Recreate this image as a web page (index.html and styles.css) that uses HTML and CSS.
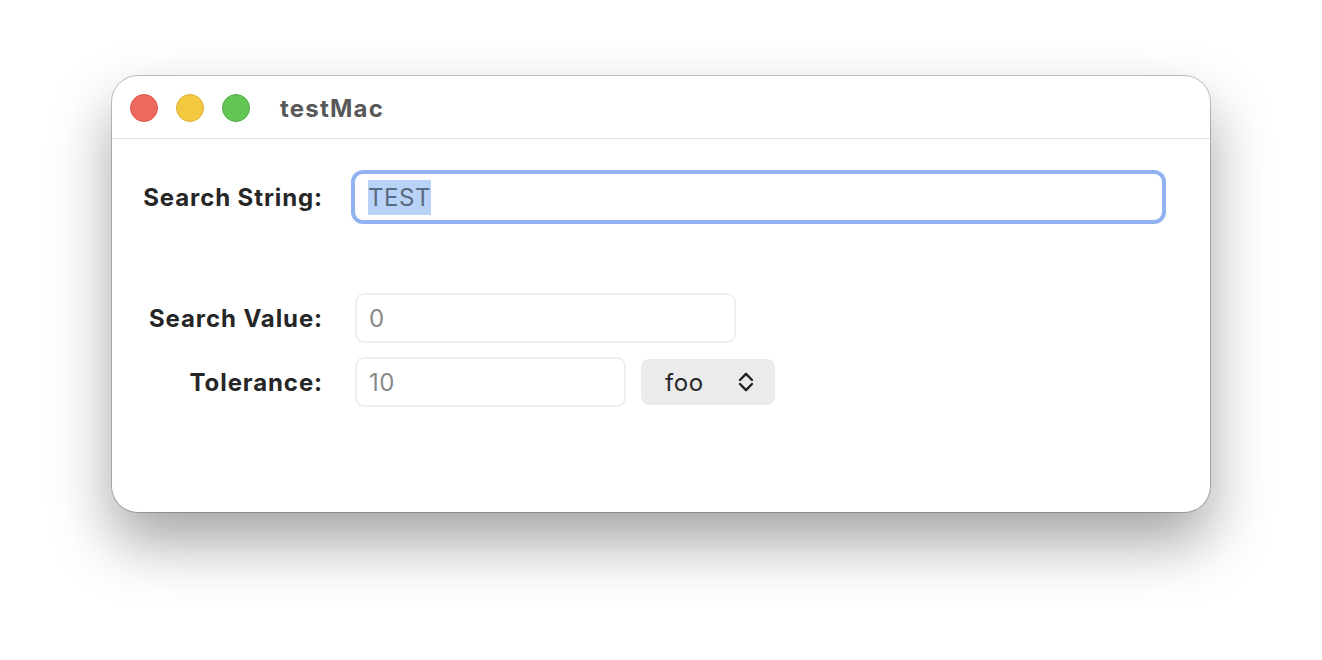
FILE: index.html
```html
<!DOCTYPE html>
<html lang="en">
<head>
  <meta charset="UTF-8" />
  <title>testMac</title>
  <link rel="stylesheet" href="styles.css">
</head>
<body>
  <div class="window">
    <div class="titlebar">
      <div class="lights">
        <span class="light close"></span>
        <span class="light minimize"></span>
        <span class="light zoom"></span>
      </div>
      <div class="title">testMac</div>
    </div>

    <div class="form">
      <div class="row row-string">
        <label class="label">Search String:</label>
        <div class="field focused"><span class="selected">TEST</span></div>
      </div>
      <div class="row row-value">
        <label class="label">Search Value:</label>
        <div class="field value-field">0</div>
      </div>
      <div class="row row-tolerance">
        <label class="label">Tolerance:</label>
        <div class="field tolerance-field">10</div>
        <div class="popup">
          <span>foo</span>
          <svg class="chevrons" width="16" height="22" viewBox="0 0 16 22">
            <path d="M2 9 L8 2.8 L14 9" fill="none" stroke="#222" stroke-width="2.4" stroke-linecap="round" stroke-linejoin="round"/>
            <path d="M2 13 L8 19.2 L14 13" fill="none" stroke="#222" stroke-width="2.4" stroke-linecap="round" stroke-linejoin="round"/>
          </svg>
        </div>
      </div>
    </div>
  </div>
</body>
</html>
```

FILE: styles.css
```css
html, body {
  background: white;
}
body {
  margin: 0;
  min-height: 660px;
  box-sizing: border-box;
  font-family: Inter, "Noto Sans", sans-serif;
  padding: 76px 0 0 112px;
}
.window {
  width: 1098px;
  height: 436px;
  background: white;
  border-radius: 26px;
  box-shadow: 0 0 0 1px rgba(0,0,0,0.22), 0 30px 60px rgba(0,0,0,0.36);
  overflow: hidden;
}
.titlebar {
  height: 63px;
  box-sizing: border-box;
  border-bottom: 1px solid #e2e2e2;
  display: flex;
  align-items: center;
  padding: 2px 0 0 18px;
}
.lights {
  display: flex;
  gap: 18px;
}
.light {
  width: 28px;
  height: 28px;
  border-radius: 50%;
  box-sizing: border-box;
}
.close { background: #ee6a5f; border: 1px solid #d9574d; }
.minimize { background: #f4c740; border: 1px solid #ddb02f; }
.zoom { background: #62c554; border: 1px solid #50ad43; }
.title {
  margin-left: 30px;
  font-size: 24px;
  font-weight: 700;
  color: #585858;
  letter-spacing: 1.2px;
}
.form {
  padding-top: 31px;
}
.row {
  display: flex;
  align-items: center;
}
.label {
  width: 211px;
  text-align: right;
  font-size: 24px;
  font-weight: 700;
  color: #262626;
  margin-right: 32px;
  letter-spacing: 0.9px;
}
.field {
  box-sizing: border-box;
  height: 50px;
  border: 2px solid #efefef;
  border-radius: 9px;
  padding-left: 12px;
  display: flex;
  align-items: center;
  font-size: 24px;
  letter-spacing: 0.6px;
  color: #8a8a8a;
}
.focused {
  width: 815px;
  height: 54px;
  margin-left: -4px;
  border: 4px solid #91b1f1;
  border-radius: 12px;
  padding-left: 13px;
  color: #5a6a80;
}
.selected {
  background: #b9d2f8;
  padding: 3px 0;
}
.row-value {
  margin-top: 69px;
}
.value-field {
  width: 381px;
}
.row-tolerance {
  margin-top: 14px;
}
.tolerance-field {
  width: 271px;
}
.popup {
  margin-left: 15px;
  width: 134px;
  height: 46px;
  box-sizing: border-box;
  background: #ebebeb;
  border-radius: 8px;
  display: flex;
  align-items: center;
  justify-content: space-between;
  padding: 0 21px 0 24px;
  font-size: 24px;
  letter-spacing: 0.6px;
  color: #262626;
}
```
